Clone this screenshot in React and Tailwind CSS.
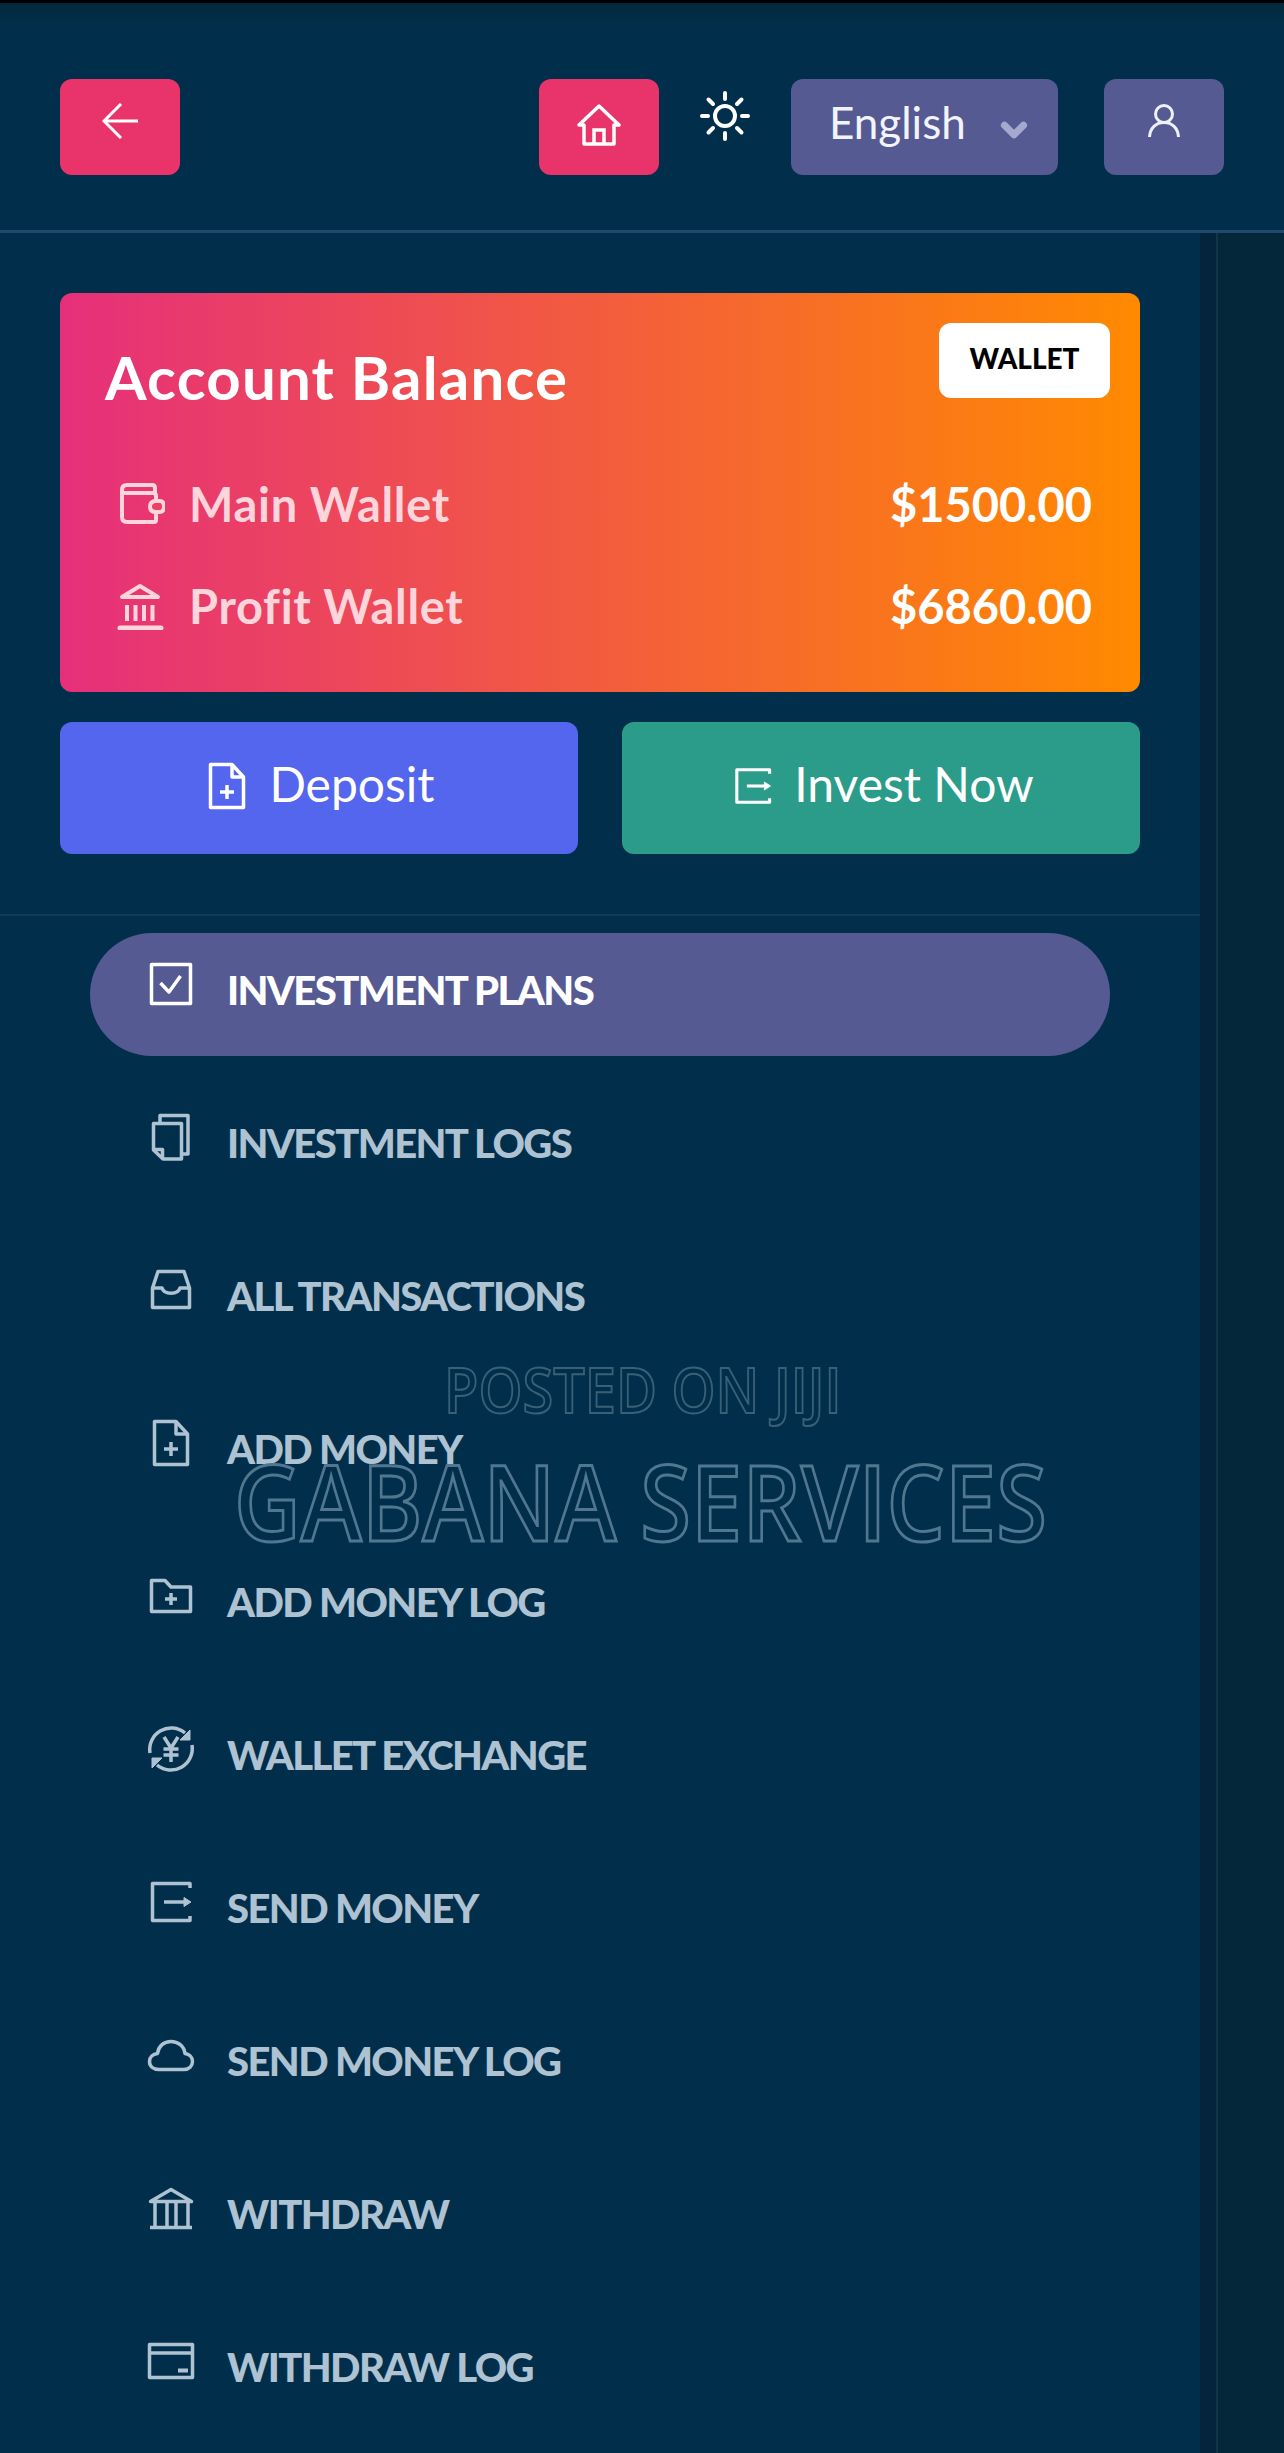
import { ChevronDown } from 'lucide-react';

const Svg = ({ children, className = 'w-12 h-12', sw = 3.5 }) => (
  <svg
    viewBox="0 0 48 48"
    fill="none"
    stroke="currentColor"
    strokeWidth={sw}
    strokeLinejoin="round"
    strokeLinecap="butt"
    className={`shrink-0 ${className}`}
  >
    {children}
  </svg>
);

const CheckIcon = () => (
  <Svg>
    <rect x="4.5" y="4.5" width="39" height="39" />
    <path d="M13.5 23 L22 32 L33.5 16" />
  </Svg>
);

const LogsIcon = () => (
  <Svg>
    <path d="M6.5 10.5 H34.5 V46 H16 L6.5 37 Z" />
    <path d="M6.5 36.5 H15.5 V46" />
    <path d="M13 10 V2.5 H41 V41 H35" />
  </Svg>
);

const InboxIcon = () => (
  <Svg>
    <path d="M5.5 22 L11 5.5 H37 L42.5 22 V41.5 H5.5 Z" />
    <path d="M5.5 22 H15 C17 29 31 29 33 22 H42.5" />
  </Svg>
);

const DocPlusIcon = () => (
  <Svg>
    <path d="M7.5 2.5 H29 L40.5 15 V45.5 H7.5 Z" />
    <path d="M29 2.5 V15 H40.5" />
    <path d="M24 23 V37 M17 30 H31" />
  </Svg>
);

const FolderPlusIcon = () => (
  <Svg>
    <path d="M4.5 8.5 H18 L24 15 H43.5 V39.5 H4.5 Z" />
    <path d="M24 21 V33 M18 27 H30" />
  </Svg>
);

const ExchangeIcon = () => (
  <Svg>
    <path d="M3 28 A21.5 21.5 0 0 1 38 8" />
    <path d="M45 20 A21.5 21.5 0 0 1 10 40" />
    <path d="M43 5 V15 H33 Z" fill="currentColor" strokeWidth="1" />
    <path d="M5 43 V33 H15 Z" fill="currentColor" strokeWidth="1" />
    <path d="M17 12 L24 23 L31 12 M24 23 V37 M16.5 24 H31.5 M16.5 30 H31.5" />
  </Svg>
);

const SendIcon = () => (
  <Svg>
    <path d="M43 10 V5.5 H5.5 V42.5 H43 V38" />
    <path d="M17 24 H38" />
    <path d="M37 19.5 L44 24 L37 28.5 Z" fill="currentColor" strokeWidth="1" />
  </Svg>
);

const CloudIcon = () => (
  <Svg>
    <path d="M12 38.5 H37 C42 38.5 45.5 35 45.5 30.5 C45.5 26 42 23 38 22.5 C37 15 31 10.5 24 10.5 C17 10.5 11.5 15 10.5 22.5 C6 23 2.5 26 2.5 30.5 C2.5 35 6 38.5 12 38.5 Z" />
  </Svg>
);

const BankIcon = () => (
  <Svg>
    <path d="M3.5 17.5 L24 5.5 L44.5 17.5 Z" />
    <path d="M8 18 V43 M20 18 V43 M29 18 V43 M41 18 V43" />
    <path d="M3 43.5 H45" />
  </Svg>
);

const CardIcon = () => (
  <Svg>
    <rect x="2.5" y="7.5" width="43" height="33" />
    <path d="M2.5 16 H45.5" />
    <path d="M31 33.5 H41" strokeWidth="4" />
  </Svg>
);

const WalletIcon = () => (
  <Svg sw={4}>
    <path d="M7 13 H36 Q39 13 39 16 V40 Q39 42 37 42 H10 Q5 42 5 37 V10 Q5 5 10 5 H35 Q38 5 38 8 V13" />
    <path d="M39 21 H43 Q47 21 47 26.5 Q47 32 43 32 H39 Q33 32 33 26.5 Q33 21 39 21 Z" fill="#ec4060" />
  </Svg>
);

const PillarIcon = () => (
  <Svg sw={4}>
    <path d="M5 15 L23 4 L41 15 Z" />
    <path d="M10 23 V39 M18.5 23 V39 M27 23 V39 M35.5 23 V39" />
    <path d="M3 46 H44" strokeLinecap="round" strokeWidth="5" />
  </Svg>
);

const navItems = [
  { label: 'INVESTMENT PLANS', Icon: CheckIcon, active: true },
  { label: 'INVESTMENT LOGS', Icon: LogsIcon },
  { label: 'ALL TRANSACTIONS', Icon: InboxIcon },
  { label: 'ADD MONEY', Icon: DocPlusIcon },
  { label: 'ADD MONEY LOG', Icon: FolderPlusIcon },
  { label: 'WALLET EXCHANGE', Icon: ExchangeIcon },
  { label: 'SEND MONEY', Icon: SendIcon },
  { label: 'SEND MONEY LOG', Icon: CloudIcon },
  { label: 'WITHDRAW', Icon: BankIcon },
  { label: 'WITHDRAW LOG', Icon: CardIcon },
];

const App = () => {
  return (
    <div className="relative h-[2453px] w-[1284px] overflow-hidden bg-[#012f4b] font-['Lato',sans-serif] text-white">
      <div className="h-[3px] bg-black" />

      <header className="border-b-[3px] border-[#1f4a6b]">
        <div className="h-5 bg-gradient-to-b from-[#04283a] to-[#012f4b]" />
        <div className="flex items-center px-[60px] pt-14 pb-[55px]">
          <button className="flex h-24 w-[120px] items-center justify-center rounded-xl bg-[#e8346a]">
            <svg viewBox="0 0 36 36" fill="none" stroke="currentColor" strokeWidth="3" className="mb-3 h-9 w-9">
              <path d="M19 1 L2 18 L19 35 M2 18 H36" />
            </svg>
          </button>

          <button className="ml-auto flex h-24 w-[120px] items-center justify-center rounded-xl bg-[#e8346a]">
            <svg viewBox="0 0 44 42" fill="none" stroke="currentColor" strokeWidth="3.5" className="mb-1 h-[42px] w-11">
              <path d="M2 21 L22 2 L42 21 L37 21 V40 H7 V21 Z" strokeLinejoin="round" />
              <path d="M17 40 V26 H27 V40" />
            </svg>
          </button>

          <div className="flex w-[132px] justify-center pb-[22px]">
            <svg viewBox="0 0 50 50" fill="none" stroke="currentColor" strokeWidth="4" strokeLinecap="round" className="h-[50px] w-[50px]">
              <circle cx="25" cy="25" r="10" />
              <path d="M25 2 V8 M25 42 V48 M2 25 H8 M42 25 H48 M8.5 8.5 L13 13 M37 37 L41.5 41.5 M8.5 41.5 L13 37 M37 13 L41.5 8.5" />
            </svg>
          </div>

          <button className="flex h-24 w-[267px] items-center rounded-xl bg-[#555a92] pl-[38px]">
            <span className="mb-2.5 text-[44px] leading-none text-[#f2f3fb]">English</span>
            <ChevronDown size={38} strokeWidth={4.5} className="mt-1.5 ml-[29px] text-[#a5a9cf]" />
          </button>

          <button className="ml-[46px] flex h-24 w-[120px] items-center justify-center rounded-xl bg-[#555a92]">
            <svg viewBox="0 0 32 34" fill="none" stroke="currentColor" strokeWidth="3" className="mb-3 h-[34px] w-8 text-[#eef0fa]">
              <circle cx="16" cy="10" r="8.5" />
              <path d="M1.5 33 C2 24 8 18.5 16 18.5 C24 18.5 30 24 30.5 33" />
            </svg>
          </button>
        </div>
      </header>

      <div className="flex">
        <aside className="w-[1200px] shrink-0">
          <div className="px-[60px] pt-[60px] pb-[60px]">
            <div className="h-[399px] rounded-xl bg-[linear-gradient(90deg,#e62f7b,#ff8a00)] p-[30px]">
              <div className="flex items-start justify-between">
                <h2 className="mt-[24px] ml-[15px] text-[60px] leading-none font-bold tracking-[1.2px]">Account Balance</h2>
                <span className="flex h-[75px] w-[171px] items-center justify-center rounded-xl bg-white pb-1.5 text-[28px] font-black text-black">
                  WALLET
                </span>
              </div>

              <div className="mt-[46px] pr-[18px] pl-[27px]">
                <div className="flex h-[102px] items-center justify-between">
                  <div className="flex items-center gap-[24px] text-[#ffd5dc]">
                    <WalletIcon />
                    <span className="text-[47px] leading-none font-bold tracking-[0.7px]">Main Wallet</span>
                  </div>
                  <span className="text-[47px] leading-none font-bold">$1500.00</span>
                </div>
                <div className="flex h-[102px] items-center justify-between">
                  <div className="flex items-center gap-[24px] text-[#ffd5dc]">
                    <PillarIcon />
                    <span className="text-[47px] leading-none font-bold tracking-[0.7px]">Profit Wallet</span>
                  </div>
                  <span className="text-[47px] leading-none font-bold">$6860.00</span>
                </div>
              </div>
            </div>

            <div className="mt-[30px] grid grid-cols-2 gap-[44px]">
              <button className="flex h-[132px] items-center justify-center gap-[18px] rounded-xl bg-[#5465ee]">
                <Svg className="mb-1 h-12 w-12">
                  <path d="M7.5 2.5 H29 L40.5 15 V45.5 H7.5 Z" />
                  <path d="M29 2.5 V15 H40.5" />
                  <path d="M24 23 V37 M17 30 H31" />
                </Svg>
                <span className="mb-2 text-[48px] leading-none">Deposit</span>
              </button>
              <button className="flex h-[132px] items-center justify-center gap-[20px] rounded-xl bg-[#2c9c8a]">
                <Svg className="mb-1 ml-1 h-[42px] w-[42px]">
                  <path d="M43 10 V5.5 H5.5 V42.5 H43 V38" />
                  <path d="M17 24 H38" />
                  <path d="M37 19.5 L44 24 L37 28.5 Z" fill="currentColor" strokeWidth="1" />
                </Svg>
                <span className="mb-2 text-[48px] leading-none">Invest Now</span>
              </button>
            </div>
          </div>

          <nav className="border-t-2 border-[#0f3a5c] px-[90px] pt-[17px]">
            <ul className="flex flex-col gap-[30px]">
              {navItems.map(({ label, Icon, active }) => (
                <li
                  key={label}
                  className={`flex h-[123px] items-center gap-[32px] rounded-full pl-[57px] ${
                    active ? 'bg-[#555a92] text-white' : 'text-[#aec2d2]'
                  }`}
                >
                  <span className="mb-[21px]">
                    <Icon />
                  </span>
                  <span className="mb-[9px] text-[40px] leading-none font-black tracking-[-1.6px]">{label}</span>
                </li>
              ))}
            </ul>
          </nav>
        </aside>

        <div className="h-[2220px] w-4 shrink-0 bg-[#03243a]" />
        <div className="h-[2220px] flex-1 border-l-2 border-[#143548] bg-[#04283a]" />
      </div>

      {/* watermark sits over the list */}
      <div className="pointer-events-none absolute top-[1349px] left-[444px] origin-left scale-x-[0.888] font-['Open_Sans',sans-serif] text-[63px] leading-[80px] font-semibold whitespace-nowrap text-transparent [-webkit-text-stroke:2px_#3a6078]">
        POSTED ON JIJI
      </div>
      <div className="pointer-events-none absolute top-[1431px] left-[234px] origin-left scale-x-[0.877] font-['Open_Sans',sans-serif] text-[105px] leading-[140px] font-semibold whitespace-nowrap text-transparent [-webkit-text-stroke:3px_#507690]">
        GABANA SERVICES
      </div>
    </div>
  );
};

export default App;
